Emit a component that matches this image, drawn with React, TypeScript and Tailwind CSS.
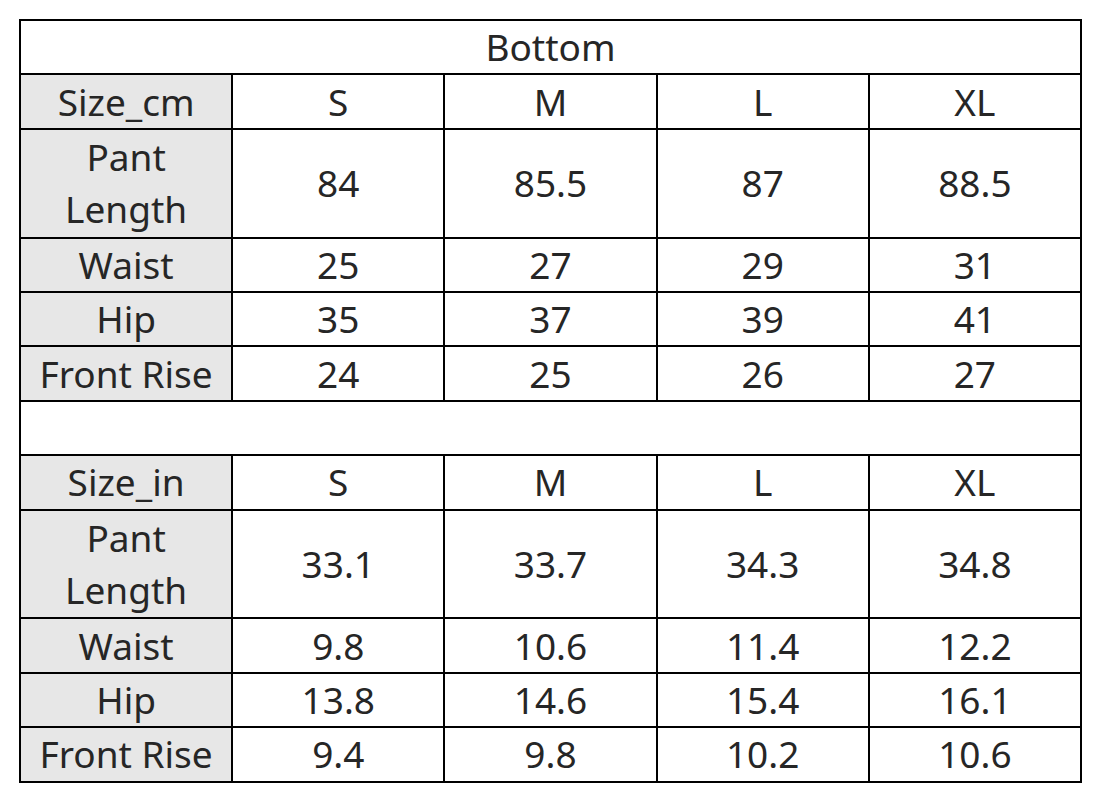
const sizes = ["S", "M", "L", "XL"];

const cmRows = [
  { label: "Pant Length", values: ["84", "85.5", "87", "88.5"], tall: true },
  { label: "Waist", values: ["25", "27", "29", "31"] },
  { label: "Hip", values: ["35", "37", "39", "41"] },
  { label: "Front Rise", values: ["24", "25", "26", "27"] },
];

const inRows = [
  { label: "Pant Length", values: ["33.1", "33.7", "34.3", "34.8"], tall: true },
  { label: "Waist", values: ["9.8", "10.6", "11.4", "12.2"] },
  { label: "Hip", values: ["13.8", "14.6", "15.4", "16.1"] },
  { label: "Front Rise", values: ["9.4", "9.8", "10.2", "10.6"] },
];

type Row = { label: string; values: string[]; tall?: boolean };

const cell = "border-2 border-black p-0";

function Block({ unit, rows }: { unit: string; rows: Row[] }) {
  return (
    <>
      <tr className="h-[54.4px]">
        <td className={`${cell} bg-[#e7e7e7]`}>{unit}</td>
        {sizes.map((s) => (
          <td key={s} className={cell}>
            {s}
          </td>
        ))}
      </tr>
      {rows.map((row) => (
        <tr key={row.label} className={row.tall ? "h-[108.8px]" : "h-[54.4px]"}>
          <td className={`${cell} bg-[#e7e7e7]`}>
            {row.tall ? (
              <>
                Pant
                <br />
                Length
              </>
            ) : (
              row.label
            )}
          </td>
          {row.values.map((v, i) => (
            <td key={i} className={cell}>
              {v}
            </td>
          ))}
        </tr>
      ))}
    </>
  );
}

export default function App() {
  return (
    <div className="min-h-[800px] w-[1101px] bg-white pl-[19px] pt-[19px]">
      <table
        className="w-[1063px] table-fixed border-collapse border-2 border-black text-center text-[37px] leading-[52px] text-[#262626]"
        style={{ fontFamily: '"Noto Sans", "Open Sans", sans-serif' }}
      >
        <tbody>
          <tr className="h-[54.4px]">
            <td colSpan={5} className={cell}>
              Bottom
            </td>
          </tr>
          <Block unit="Size_cm" rows={cmRows} />
          <tr className="h-[54.4px]">
            <td colSpan={5} className={cell} />
          </tr>
          <Block unit="Size_in" rows={inRows} />
        </tbody>
      </table>
    </div>
  );
}
